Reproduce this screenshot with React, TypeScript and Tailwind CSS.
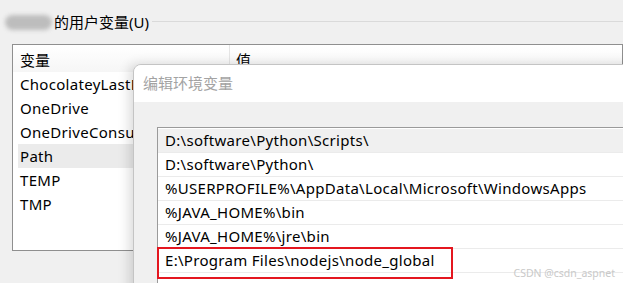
const userVars = ['ChocolateyLastPathUpdate', 'OneDrive', 'OneDriveConsumer', 'Path', 'TEMP', 'TMP'];

const pathItems = [
  'D:\\software\\Python\\Scripts\\',
  'D:\\software\\Python\\',
  '%USERPROFILE%\\AppData\\Local\\Microsoft\\WindowsApps',
  '%JAVA_HOME%\\bin',
  '%JAVA_HOME%\\jre\\bin',
  'E:\\Program Files\\nodejs\\node_global',
  '',
];

export default function App() {
  return (
    <div className="relative w-[623px] h-[283px] overflow-hidden bg-[#f0f0f0] text-[15px] text-black font-['Noto_Sans','Noto_Sans_CJK_SC',sans-serif]">
      {/* group title */}
      <div className="flex items-center h-[22px] mt-[11px] pl-[5px]">
        <div className="w-[47px] h-[15px] rounded-full bg-[#bdbdbd] blur-[2px]" />
        <span className="ml-[2px] leading-none">的用户变量(U)</span>
        <div className="flex-1 ml-[3px] h-px bg-[#dadada] -mt-[2px]" />
      </div>

      {/* user variable list (values column is hidden by the dialog) */}
      <div className="ml-[12px] mt-[11px] h-[207px] border border-[#8f8f8f] bg-white">
        <div className="flex h-[27px] bg-gradient-to-b from-white to-[#f6f6f6]">
          <div className="w-[217px] pl-[7px] pt-[4px] border-r border-[#e5e5e5]">变量</div>
          <div className="flex-1 pl-[6px] pt-[4px]">值</div>
        </div>
        <div className="pl-[5px]">
          {userVars.map((name) => (
            <div
              key={name}
              className={`flex h-[24px] items-center ${name === 'Path' ? 'bg-[#ebebeb]' : ''}`}
            >
              <div className="w-[115px] pl-[2px] whitespace-nowrap overflow-hidden tracking-[0.3px]">{name}</div>
            </div>
          ))}
        </div>
      </div>

      {/* edit dialog */}
      <div className="absolute left-[133px] top-[64px] w-[520px] h-[260px] rounded-tl-[8px] border border-[#c4c4c4] bg-[#f0f0f0] shadow-[-4px_0_12px_rgba(0,0,0,0.14)] overflow-hidden">
        <div className="h-[37px] bg-white pl-[9px] flex items-center text-[#a3a3a3]">编辑环境变量</div>
        <div className="relative ml-[23px] mt-[25px] border-l border-t border-[#9a9a9a] bg-white pt-[1px]">
          {pathItems.map((p, i) => (
            <div
              key={i}
              className={`h-[24px] flex items-center pl-[7px] border-b border-[#ebebeb] whitespace-nowrap tracking-[0.3px] ${i === 0 ? 'bg-[#f0f0f0]' : ''}`}
            >
              {p}
            </div>
          ))}
          {/* highlight box */}
          <div className="absolute left-[-1px] top-[119px] w-[296px] h-[32px] border-2 border-[#e4161f]" />
        </div>
      </div>

      {/* watermark */}
      <div className="absolute right-[8px] bottom-[5px] text-[10.5px] leading-none text-[#c9c9c9]">
        CSDN @csdn_aspnet
      </div>
    </div>
  );
}
